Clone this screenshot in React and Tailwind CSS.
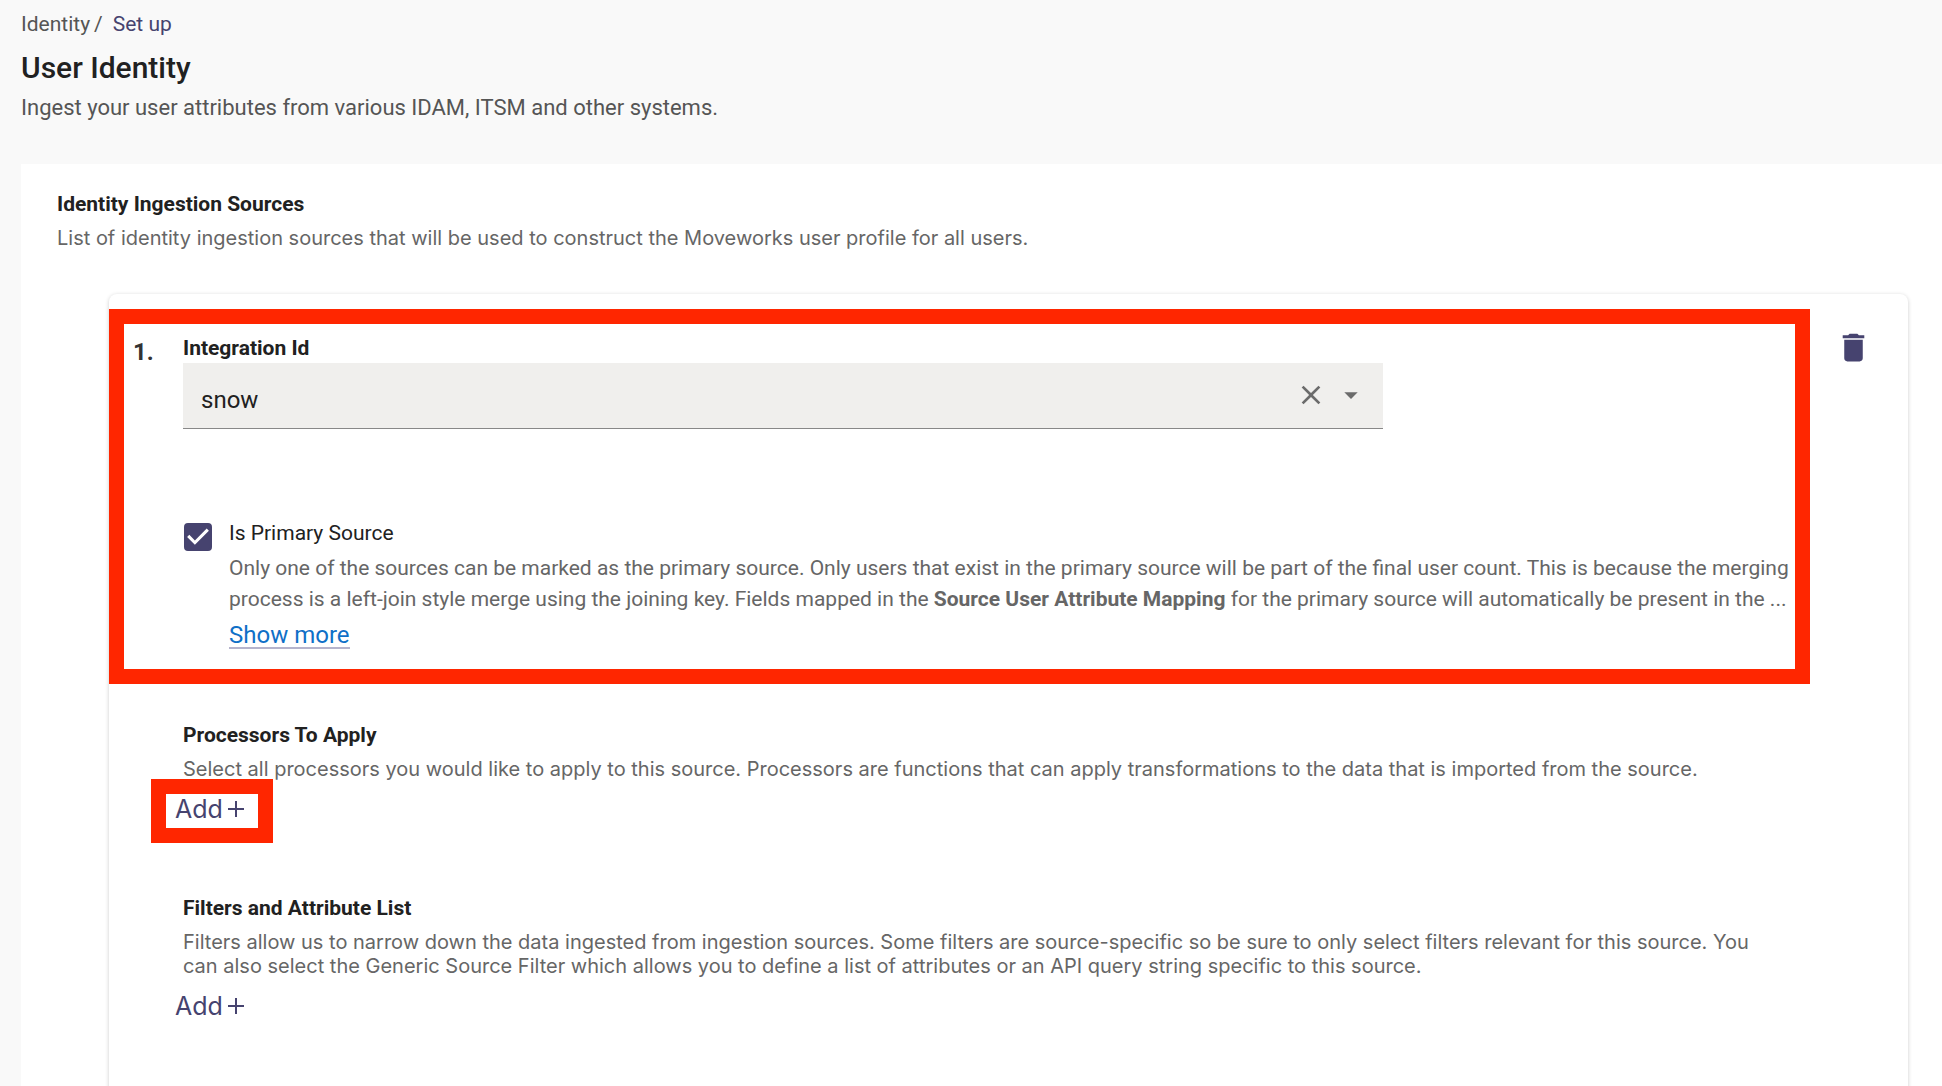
import { useState } from "react";
import { MdArrowDropDown, MdClose, MdDelete } from "react-icons/md";

function AddButton({ highlighted = false }) {
    return (
        <div className="relative -ml-2 w-fit">
            <button type="button" className="flex items-center gap-1 text-[25px] leading-8 text-[#46436f] cursor-pointer">
                Add
                <svg width="18" height="18" viewBox="0 0 18 18" fill="none" stroke="currentColor" strokeWidth="2" aria-hidden="true">
                    <path d="M9 1v16M1 9h16" />
                </svg>
            </button>
            {highlighted && (
                <div className="absolute -left-6 -right-7 -top-3.5 -bottom-4.5 border-[15px] border-[#ff2600] pointer-events-none" />
            )}
        </div>
    );
}

function Section({ title, description, children }) {
    return (
        <section>
            <h3 className="font-['Roboto',sans-serif] text-[21px] leading-6 font-bold text-[#212121]">{title}</h3>
            <p className="mt-2.5 mb-3 text-xl leading-6 text-[#666666]">{description}</p>
            {children}
        </section>
    );
}

export default function App() {
    const [source, setSource] = useState("snow");
    const [primary, setPrimary] = useState(true);

    return (
        <div className="h-screen overflow-hidden bg-[#f9f9f9] font-['Inter',sans-serif] pl-[21px]">

            <header className="h-[164px] pt-3 font-['Roboto',sans-serif]">
                <nav className="flex gap-2.5 text-[21px] leading-6 text-[#555555]">
                    <span className="flex gap-1"><span>Identity</span><span>/</span></span>
                    <a href="#setup" className="text-[#46436f]">Set up</a>
                </nav>
                <h1 className="mt-3 text-3xl leading-10 font-medium text-[#212121]">User Identity</h1>
                <p className="mt-2 text-[22px] leading-6 text-[#555555]">
                    Ingest your user attributes from various IDAM, ITSM and other systems.
                </p>
            </header>

            <main className="bg-white pl-9 pr-[34px] pt-7">
                <h2 className="font-['Roboto',sans-serif] text-[21px] leading-6 font-bold text-[#212121]">Identity Ingestion Sources</h2>
                <p className="mt-2.5 text-xl leading-6 text-[#666666]">
                    List of identity ingestion sources that will be used to construct the Moveworks user profile for all users.
                </p>

                <div className="mt-11 ml-[52px] h-screen rounded-lg shadow-[0_1px_4px_rgba(0,0,0,0.2)] flex justify-between pt-[15px] pr-9">
                    <div className="flex-1 max-w-[1701px]">

                        <div className="relative flex font-['Roboto',sans-serif] pt-[27px] h-[375px]">
                            <div className="absolute inset-0 border-[15px] border-[#ff2600] pointer-events-none" />
                            <span className="w-[74px] shrink-0 pl-6 text-2xl leading-8 font-bold text-[#333333]">1.</span>
                            <div className="flex-1 pr-5">
                                <label htmlFor="integration" className="block text-[21px] leading-6 font-bold text-[#212121]">Integration Id</label>
                                <div className="mt-[3px] relative max-w-[1200px]">
                                    <select
                                        id="integration"
                                        value={source}
                                        onChange={(e) => setSource(e.target.value)}
                                        className="block w-full h-[66px] appearance-none bg-[#f0efed] border-b border-[#888888] pl-[18px] pt-2 text-2xl text-[#212121]"
                                    >
                                        <option value="" />
                                        <option value="snow">snow</option>
                                    </select>
                                    <div className="absolute right-4 top-4 flex gap-2 text-[#6b6b6b] pointer-events-none">
                                        <button type="button" aria-label="Clear" onClick={() => setSource("")} className="pointer-events-auto">
                                            <MdClose size={32} />
                                        </button>
                                        <MdArrowDropDown size={32} />
                                    </div>
                                </div>

                                <div className="mt-[92px] flex gap-[17px] pl-px">
                                    <div className="relative mt-0.5 size-7 shrink-0">
                                        <input
                                            id="primary"
                                            type="checkbox"
                                            checked={primary}
                                            onChange={(e) => setPrimary(e.target.checked)}
                                            className="peer block size-7 appearance-none rounded border-2 border-[#46436f] checked:bg-[#46436f]"
                                        />
                                        <svg className="absolute inset-0 hidden peer-checked:block pointer-events-none" viewBox="3 3 18 18" fill="white" aria-hidden="true">
                                            <path d="M10 17l-5-5 1.41-1.41L10 14.17l7.59-7.59L19 8l-9 9z" />
                                        </svg>
                                    </div>
                                    <div className="flex-1">
                                        <label htmlFor="primary" className="block text-[21px] leading-6 text-[#212121]">Is Primary Source</label>
                                        <p className="mt-2 text-[21px] leading-[31px] text-[#666666]">
                                            Only one of the sources can be marked as the primary source. Only users that exist in the primary source will be part of the final user count. This is because the merging process is a left-join style merge using the joining key. Fields mapped in the <strong>Source User Attribute Mapping</strong> for the primary source will automatically be present in the ...
                                        </p>
                                        <a href="#more" className="inline-block mt-2 text-2xl leading-6 text-[#0f70c7] border-b-2 border-[#b5b4cc]">Show more</a>
                                    </div>
                                </div>
                            </div>
                        </div>

                        <div className="pl-[74px] pr-8 pt-[39px] flex flex-col gap-[71px]">
                            <Section
                                title="Processors To Apply"
                                description="Select all processors you would like to apply to this source. Processors are functions that can apply transformations to the data that is imported from the source."
                            >
                                <AddButton highlighted />
                            </Section>
                            <Section
                                title="Filters and Attribute List"
                                description="Filters allow us to narrow down the data ingested from ingestion sources. Some filters are source-specific so be sure to only select filters relevant for this source. You can also select the Generic Source Filter which allows you to define a list of attributes or an API query string specific to this source."
                            >
                                <AddButton />
                            </Section>
                        </div>
                    </div>

                    <button type="button" aria-label="Delete source" className="self-start mt-5 text-[#46436f]">
                        <MdDelete size={37} />
                    </button>
                </div>
            </main>

        </div>
    );
}
